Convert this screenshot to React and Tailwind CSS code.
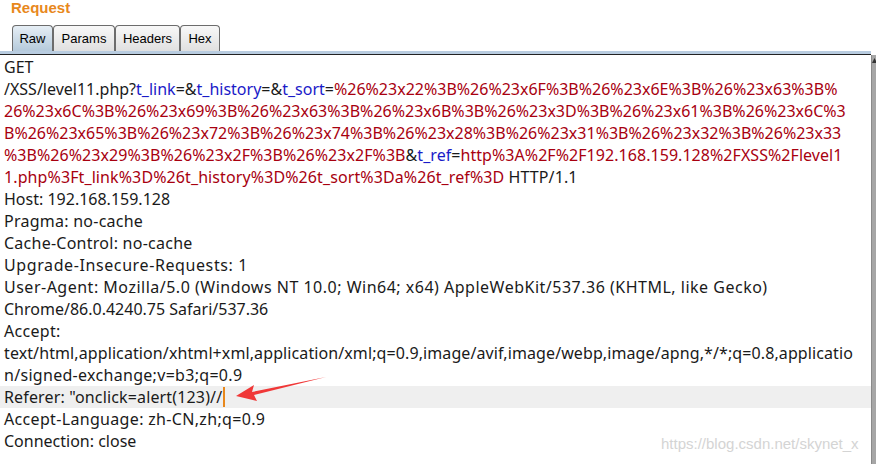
import React from "react";

const B = ({ children }) => <span className="text-[#1a1ac8]">{children}</span>;
const R = ({ children }) => <span className="text-[#a8000f]">{children}</span>;

export default function App() {
  const tabs = [
    ["Raw", "w-[41px]"],
    ["Params", "w-[62px]"],
    ["Headers", "w-[65px]"],
    ["Hex", "w-[40px]"],
  ];
  return (
    <div className="w-[876px] h-[464px] bg-white overflow-hidden relative" style={{ fontFamily: "'Noto Sans', 'Open Sans', sans-serif" }}>
      <div className="h-[25px] pl-[11px] pt-px text-[15px] font-bold text-[#e8881c] leading-[14px]" style={{ fontFamily: "'Liberation Sans', Arial, sans-serif" }}>Request</div>
      <div className="flex pl-[12px] h-[26px] items-end">
        {tabs.map(([t, w], i) => (
          <div
            key={t}
            className={
              w + " h-[26px] flex items-center justify-center text-[13px] text-black border border-b-0 border-[#6c6c6c] rounded-t-[4px] " +
              (i === 0 ? "bg-gradient-to-b from-[#e6eef5] to-[#b5cadb]" : "bg-gradient-to-b from-[#f8f8f8] to-[#e0e0e0]")
            }
            style={{ fontFamily: "'Liberation Sans', Arial, sans-serif" }}
          >
            {t}
          </div>
        ))}
      </div>
      <div className="h-[3px] bg-[#b8cce0] mr-[5px]" />
      <div className="h-px bg-[#222] mr-[5px]" />
      <div className="flex">
        <div className="flex-1 pt-[1px] text-[16px] leading-[22px] text-[#1a1a1a] whitespace-nowrap">
          <div className="pl-[4px]">GET</div>
          <div className="pl-[4px]">/XSS/level11.php?<B>t_link</B>=&amp;<B>t_history</B>=&amp;<B>t_sort</B>=<R>%26%23x22%3B%26%23x6F%3B%26%23x6E%3B%26%23x63%3B%</R></div>
          <div className="pl-[4px]"><R>26%23x6C%3B%26%23x69%3B%26%23x63%3B%26%23x6B%3B%26%23x3D%3B%26%23x61%3B%26%23x6C%3</R></div>
          <div className="pl-[4px]"><R>B%26%23x65%3B%26%23x72%3B%26%23x74%3B%26%23x28%3B%26%23x31%3B%26%23x32%3B%26%23x33</R></div>
          <div className="pl-[4px] tracking-[0.05px]"><R>%3B%26%23x29%3B%26%23x2F%3B%26%23x2F%3B</R>&amp;<B>t_ref</B>=<R>http%3A%2F%2F192.168.159.128%2FXSS%2Flevel1</R></div>
          <div className="pl-[4px] tracking-[0.1px]"><R>1.php%3Ft_link%3D%26t_history%3D%26t_sort%3Da%26t_ref%3D</R> HTTP/1.1</div>
          <div className="pl-[4px]">Host: 192.168.159.128</div>
          <div className="pl-[4px] tracking-[0.25px]">Pragma: no-cache</div>
          <div className="pl-[4px] tracking-[0.25px]">Cache-Control: no-cache</div>
          <div className="pl-[4px] tracking-[0.6px]">Upgrade-Insecure-Requests: 1</div>
          <div className="pl-[4px] tracking-[0.5px]">User-Agent: Mozilla/5.0 (Windows NT 10.0; Win64; x64) AppleWebKit/537.36 (KHTML, like Gecko)</div>
          <div className="pl-[4px]">Chrome/86.0.4240.75 Safari/537.36</div>
          <div className="pl-[4px] tracking-[0.3px]">Accept:</div>
          <div className="pl-[4px] tracking-[0.1px]">text/html,application/xhtml+xml,application/xml;q=0.9,image/avif,image/webp,image/apng,*/*;q=0.8,applicatio</div>
          <div className="pl-[4px] tracking-[0.3px]">n/signed-exchange;v=b3;q=0.9</div>
          <div className="pl-[4px] bg-[#efefef] flex items-center tracking-[0.15px]">Referer: "onclick=alert(123)//<span className="inline-block w-[2px] h-[20px] bg-[#e8881c] ml-[1px]" /></div>
          <div className="pl-[4px] tracking-[0.33px]">Accept-Language: zh-CN,zh;q=0.9</div>
          <div className="pl-[4px]">Connection: close</div>
        </div>
        <div className="w-[5px] bg-[#a6a6a6] border-l border-[#8a8a8a] h-[410px] relative">
          <svg width="5" height="8" className="absolute top-[2px] left-0"><path d="M0 6 L2.5 1 L5 6 Z" fill="#333" /></svg>
        </div>
      </div>
      <svg className="absolute left-0 top-0 pointer-events-none" width="876" height="464">
        <path d="M326 377 L252 392 L254 385 L236 396 L257 401 L254 395 Z" fill="#f03838" />
      </svg>
      <div className="absolute left-[661px] top-[433px] text-[15px] text-[#d4d4d4]" style={{ fontFamily: "'Liberation Sans', Arial, sans-serif" }}>https://blog.csdn.net/skynet_x</div>
    </div>
  );
}
